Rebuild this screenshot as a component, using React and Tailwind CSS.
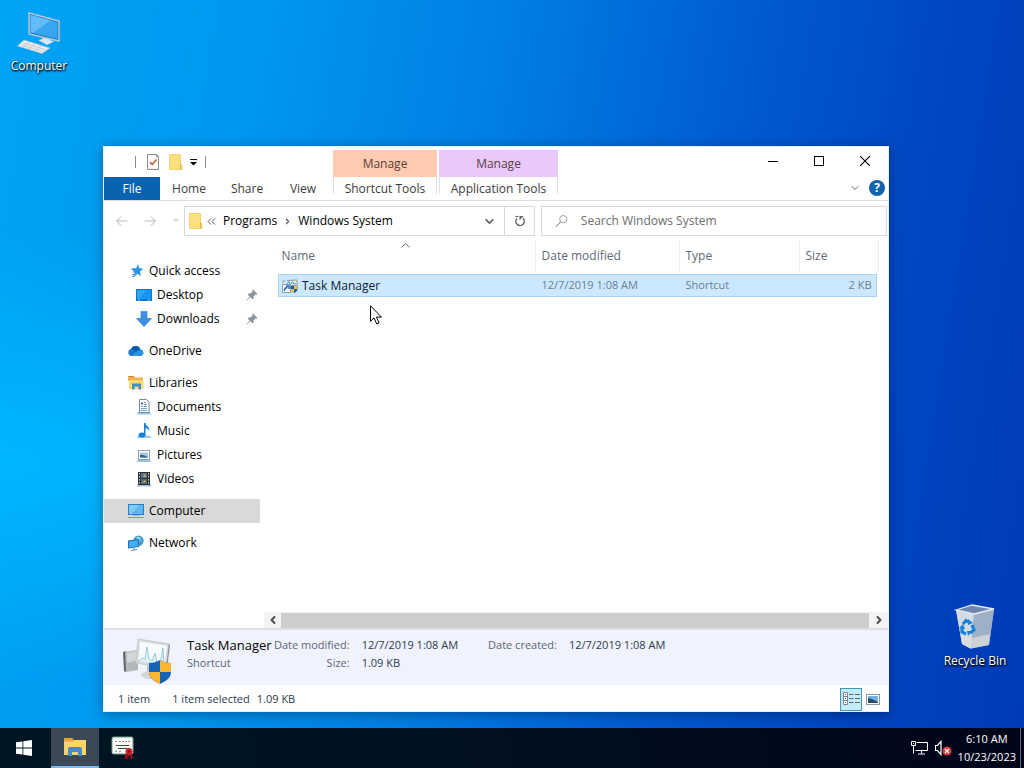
import { ChevronDown, ChevronLeft, ChevronRight } from 'lucide-react';

/* ---------- small icons (16px) ---------- */

const StarIcon = () => (
  <svg width="16" height="16" viewBox="0 0 16 16">
    <path d="M10 1l1.200 4.300 4.300.4-3.500 2.700 1 4.700-3.600-2.400L5.800 14l1-5L3.500 6l4.600-.5z" fill="#2b95e2" />
    <path d="M3.500 6h4M5 9h2M4.500 11.500h2M4.500 13.500h2" stroke="#1c7fcc" />
  </svg>
);

const DesktopIcon = () => (
  <svg width="16" height="16" viewBox="0 0 16 16">
    <rect x="0" y="2" width="16" height="12" fill="#0a78cf" />
    <rect x="1" y="3" width="14" height="9" fill="#1795f5" />
    <path d="M1 3h9L3 12H1z" fill="#2ea5fb" />
    <path d="M2 13h2M12 13h2" stroke="#9bd3ff" />
  </svg>
);

const DownloadIcon = () => (
  <svg width="16" height="16" viewBox="0 0 16 16">
    <path d="M5 .5h6v7h4.500L8 15.500.5 7.500H5z" fill="#3d8fe0" stroke="#2f7ccb" strokeWidth=".6" />
  </svg>
);

const CloudIcon = () => (
  <svg width="16" height="16" viewBox="0 0 16 16">
    <path d="M3.500 13a3.500 3.500 0 01-.4-6.900A5 5 0 0112.300 6.200 3.500 3.500 0 0113 13z" fill="#1a78cc" />
    <path d="M3.100 6.100A5 5 0 0112.300 6.200L8 8.500z" fill="#0d5bad" />
    <path d="M3.500 13L9 8l4-1.600A3.500 3.500 0 0113 13z" fill="#2a94e0" />
  </svg>
);

const LibrariesIcon = () => (
  <svg width="16" height="16" viewBox="0 0 16 16">
    <path d="M0 1h6l1 1.500h8V6H0z" fill="#eeb24a" />
    <path d="M1 1.500h4" stroke="#d8703a" />
    <path d="M1 5h14.500v9H1z" fill="#ffd970" />
    <path d="M4 14.500V8.500h9v6h-2.500v-3h-4v3z" fill="#3d8fd0" />
  </svg>
);

const DocumentsIcon = () => (
  <svg width="16" height="16" viewBox="0 0 16 16">
    <path d="M2 13h12l1.500 2.500H.5z" fill="#9cc7e2" />
    <path d="M3.500.5h7l2.500 2.500v10.500h-9.500z" fill="#fff" stroke="#71899c" />
    <path d="M8 3.500h2M8 5.500h3M5 7.500h2M8 7.500h3M5 9.500h6M5 11.500h6" stroke="#6fa3bd" />
    <path d="M5 4.500h2" stroke="#2d75b5" strokeWidth="2" />
  </svg>
);

const MusicIcon = () => (
  <svg width="16" height="16" viewBox="0 0 16 16">
    <path d="M2 12.500h12l1.500 2.500H.5z" fill="#a3cde6" />
    <ellipse cx="6" cy="12" rx="3.400" ry="2.600" fill="#1683dd" />
    <path d="M8 0h1.500c.3 3 4.500 3.500 3.600 8-.6-2-1.700-2.500-3.600-2.800V12H8z" fill="#1683dd" />
  </svg>
);

const PicturesIcon = () => (
  <svg width="16" height="16" viewBox="0 0 16 16">
    <rect x="2.500" y="3.500" width="11" height="9" fill="#fff" stroke="#8e9eab" />
    <rect x="4" y="5.500" width="8" height="5" fill="#9cc9e8" />
    <path d="M4 8l3 0 5 2v.5H4z" fill="#315e7c" />
    <path d="M2 13h12l1.500 2H.5z" fill="#9cc1da" />
  </svg>
);

const VideosIcon = () => (
  <svg width="16" height="16" viewBox="0 0 16 16">
    <path d="M2 13h12l1.500 2.500H.5z" fill="#9cc1da" />
    <rect x="2" y="1" width="12" height="13" fill="#2f3236" />
    <path d="M3.500 2v11M12.500 2v11" stroke="#c8ccd0" strokeDasharray="1.500 1.500" />
    <rect x="5" y="2" width="6" height="5" fill="#56718d" />
    <rect x="5" y="8" width="6" height="5" fill="#526477" />
    <path d="M7 5l2-2 1 3zM6 12l3-3 1 2z" fill="#e0b94a" />
  </svg>
);

const ComputerIcon = () => (
  <svg width="16" height="16" viewBox="0 0 16 16">
    <rect x="0" y="1" width="16" height="11" fill="#2582c4" />
    <rect x="1" y="2" width="14" height="9" fill="#5fb7ee" />
    <path d="M1 2h10L4 11H1z" fill="#7fcaf7" />
    <path d="M5 12.500h6" stroke="#a6bccb" />
    <path d="M0 14.500h16" stroke="#8396b8" />
  </svg>
);

const NetworkIcon = () => (
  <svg width="16" height="16" viewBox="0 0 16 16">
    <circle cx="10.500" cy="5.700" r="5.200" fill="#4a9ccc" />
    <path d="M8 2.500c2-1.500 4-.5 5 1.500l-2 3z" fill="#8fd0ec" />
    <path d="M0 5.500l11-1.500v8l-11 1.500z" fill="#1b73b8" />
    <path d="M1 6.400l9-1.200v6l-9 1.200z" fill="#41aef3" />
    <path d="M3 15.500l6-1M6 13v2" stroke="#4d91bf" />
  </svg>
);

const PinIcon = () => (
  <svg width="12" height="12" viewBox="0 0 12 12">
    <path d="M7 .5L11.500 5l-1 .8-.9-.3L7.500 7.600l.1 2-1 .9L4.300 8.200 1 11.500l-.5-.5L3.800 7.700 1.500 5.400l.9-1 2 .1L6.500 2.400 6.200 1.500z" fill="#8f979e" />
  </svg>
);

const FolderIcon = () => (
  <svg width="14" height="18" viewBox="0 0 14 18">
    <path d="M.5 1.500h11v9l1.500 1.500v4.500H.5z" fill="#fbdf80" stroke="#f3d46c" />
    <path d="M11.500 10.500V16.500" stroke="#dcb64a" />
  </svg>
);

const PropertiesIcon = () => (
  <svg width="14" height="16" viewBox="0 0 14 16">
    <path d="M1.500.5h9l2 2v13h-11z" fill="#fff" stroke="#8a8a8a" />
    <path d="M10.500.5v2h2" fill="none" stroke="#8a8a8a" />
    <path d="M4 8l2.200 2.500L10.500 5.500" fill="none" stroke="#c0623c" strokeWidth="1.600" />
  </svg>
);

const ShortcutIcon = () => (
  <svg width="16" height="16" viewBox="0 0 16 16">
    <path d="M1 5V3h2M5 2.500l10-.5v9l-7 1" fill="#e7eef2" stroke="#8d999f" />
    <path d="M5 6l2-2.500L8.500 7l2-3.500L12 6h2" fill="none" stroke="#3b94c8" />
    <rect x=".5" y="6.500" width="8" height="8" fill="#fff" stroke="#8aa0b4" />
    <path d="M2.500 13c0-2.500 1-3.500 3-3.500M4 8h3v3" fill="none" stroke="#1e66b8" strokeWidth="1.400" />
    <path d="M12 7l3.500 1v3c0 2-2 3.500-3.500 4-1.500-.5-3.500-2-3.500-4V8z" fill="#1b5fae" />
    <path d="M12 7l3.500 1v3H12zM12 11v4c-1.500-.5-3.500-2-3.500-4z" fill="#f3bd4c" />
  </svg>
);

/* ---------- large icons ---------- */

const ComputerLarge = () => (
  <svg width="48" height="48" viewBox="0 0 48 48">
    <path d="M14 4l30 8v20l-30-7z" fill="#1676c0" stroke="#b8cbd8" strokeWidth="1.400" />
    <path d="M15.500 6l27 7.200v16.800l-27-6.400z" fill="#37a6ee" />
    <path d="M15.500 6l20 5.300L18 24l-2.500-.6z" fill="#62bcf5" />
    <path d="M27 28l8 2v4l-8-2z" fill="#b7cbd6" />
    <path d="M23 31l8-1.500 8 3-7 3.500z" fill="#dce6ec" />
    <path d="M9 31l26 8-8 5.500L2.500 37z" fill="#e9edef" stroke="#aebfc9" strokeWidth=".7" />
    <path d="M8 34l23 7M6 36l22 6.500M14 33l-6 5M20 35l-6 5M26 37l-6 5" stroke="#b5c0c6" strokeWidth=".7" />
  </svg>
);

const RecycleBin = () => (
  <svg width="48" height="48" viewBox="0 0 48 48">
    <path d="M5 7l16-5 22 4-5 36-19 3.500L11 41z" fill="#bccde2" fillOpacity=".85" />
    <path d="M5 7l18 4-3 34.500L11 41z" fill="#d3dce5" />
    <path d="M23 11l20-5-5 36-18 3.500z" fill="#9eb0c8" />
    <path d="M5 7l16-5 22 4-20 5z" fill="#6f86ad" stroke="#e3ebf4" strokeWidth="1.300" />
    <path d="M10 32l11 3 18-4-1.500 11L20 45.500 11 41z" fill="#dededc" fillOpacity=".75" />
    <g fill="none" stroke="#1683d8" strokeWidth="3.200">
      <path d="M12 21l3-3.500 4 2.500M21 22l2 5-4 3M15 31l-4-2 0-5" />
    </g>
    <path d="M17 16l5 4-5 2zM21 28l-4 5-1-5zM8 25l4-4 2 5z" fill="#1683d8" />
  </svg>
);

const TaskManagerLarge = () => (
  <svg width="50" height="48" viewBox="0 0 50 48">
    <path d="M0 15l3-1v21l-2-1z" fill="#5f6468" />
    <path d="M2 15l13-2v20L3 35z" fill="#b3b7b9" />
    <path d="M4 16l11-2v9L4 26z" fill="#d3d6d7" />
    <path d="M15 2l31 5-3 24-30-5z" fill="#d6dadb" stroke="#c6cacb" />
    <path d="M17 4.500l27 4.300-2.500 19.500-26-4.200z" fill="#f7fafb" />
    <path d="M46 7l1 1-3 24-1-1z" fill="#848b90" />
    <path d="M15 25l4-4 3 1 2-12 2 12 3 2 3-8 2 10 3 1 3-16 1 18" fill="#c9e6f0" fillOpacity=".5" stroke="#7cc2db" strokeWidth=".8" />
    <path d="M24 28l8 1v9h-8z" fill="#bfc4c6" />
    <ellipse cx="27" cy="38" rx="9" ry="4" fill="#d5d8d9" />
    <path d="M37 23c3 2 7 3 11 3v9c0 6-5 9-11 12-6-3-11-6-11-12v-9c4 0 8-1 11-3z" fill="#1763b5" />
    <path d="M37 23c3 2 7 3 11 3v9H37z" fill="#fbb731" />
    <path d="M26 35h11v12c-6-3-11-6-11-12z" fill="#fbb731" />
  </svg>
);

const WindowsLogo = () => (
  <svg width="16" height="16" viewBox="0 0 16 16" fill="#fff">
    <path d="M0 2.300L6.500 1.400v6.200H0zM7.300 1.300L16 0v7.600H7.300zM0 8.400h6.500v6.200L0 13.700zM7.300 8.400H16V16l-8.700-1.300z" />
  </svg>
);

const ExplorerIcon = () => (
  <svg width="24" height="24" viewBox="0 0 24 24">
    <path d="M1 3h8l2 2h11v5H1z" fill="#e9a33c" />
    <path d="M1 6.500h9l1.500-1.500H23V20H1z" fill="#ffd466" />
    <path d="M5 21v-7.500L6.500 12h11l1.500 1.500V21h-4v-4H9v4z" fill="#3f8fcf" />
  </svg>
);

const CertificateIcon = () => (
  <svg width="24" height="24" viewBox="0 0 24 24">
    <rect x="1" y="1" width="21" height="17" rx="1.500" fill="#fbfcf8" stroke="#71998a" />
    <path d="M4 5.500h2M8 5.500h11" stroke="#7b8d83" strokeDasharray="2 1" />
    <path d="M5 9.500h13M7 12.500h9" stroke="#42464a" />
    <path d="M4 16l2-1M8 16l2-1" stroke="#4a9a68" />
    <path d="M15 17l-2 6 2-.5 1 1.500 2-5 2 5 1-1.500 2 .5-3-6z" fill="#8c0f1c" />
    <circle cx="18" cy="15.500" r="3.500" fill="#cf1f31" />
    <circle cx="18" cy="15.500" r="1.300" fill="#8c0f1c" />
  </svg>
);

const ribbonTabs = [
  { label: 'Home', width: 'w-[58px]' },
  { label: 'Share', width: 'w-[58px]' },
  { label: 'View', width: 'w-[54px]' },
];

const contextTabs = [
  { label: 'Shortcut Tools', width: 'w-[104px]', color: 'bg-[#ffcbb0]' },
  { label: 'Application Tools', width: 'w-[119px]', color: 'bg-[#e9c9fb]' },
];

const navGroups = [
  [
    { label: 'Quick access', icon: StarIcon },
    { label: 'Desktop', icon: DesktopIcon, child: true, pinned: true },
    { label: 'Downloads', icon: DownloadIcon, child: true, pinned: true },
  ],
  [{ label: 'OneDrive', icon: CloudIcon }],
  [
    { label: 'Libraries', icon: LibrariesIcon },
    { label: 'Documents', icon: DocumentsIcon, child: true },
    { label: 'Music', icon: MusicIcon, child: true },
    { label: 'Pictures', icon: PicturesIcon, child: true },
    { label: 'Videos', icon: VideosIcon, child: true },
  ],
  [{ label: 'Computer', icon: ComputerIcon, active: true }],
  [{ label: 'Network', icon: NetworkIcon }],
];

const columns = [
  { label: 'Name', className: 'w-[257px]', pad: 'pl-[3px]' },
  { label: 'Date modified', className: 'w-[144px]', pad: 'pl-1.5' },
  { label: 'Type', className: 'w-[120px]', pad: 'pl-1.5' },
];

function TitleBar() {
  return (
    <header className="flex h-[54px] shrink-0 border-b border-[#dadbdc]">
      <div className="flex w-[229px] flex-col">
        <div className="flex h-[30px] items-center pl-[31px]">
          <span className="h-3 w-px bg-[#8a8a8a]" />
          <button aria-label="Properties" className="ml-2.5"><PropertiesIcon /></button>
          <button aria-label="New folder" className="ml-[9px]"><FolderIcon /></button>
          <button aria-label="Customize Quick Access Toolbar" className="ml-1.5">
            <svg width="9" height="8" viewBox="0 0 9 8">
              <path d="M1 1.500h7" stroke="#000" />
              <path d="M1 4h7L4.500 7.500z" fill="#000" />
            </svg>
          </button>
          <span className="ml-[7px] h-3 w-px bg-[#8a8a8a]" />
        </div>
        <div className="flex h-[23px]">
          <button className="w-14 bg-[#0a63b1] text-white">File</button>
          {ribbonTabs.map((tab) => (
            <button key={tab.label} className={'text-center text-[#3b3b3b] ' + tab.width}>{tab.label}</button>
          ))}
        </div>
      </div>

      <div className="flex gap-[2px] pt-[3px]">
        {contextTabs.map((tab) => (
          <div key={tab.label} className={'flex flex-col text-center ' + tab.width}>
            <div className={'h-[27px] pt-1.5 text-[#5a3d3d] ' + tab.color}>Manage</div>
            <button className="h-[17px] border-x border-[#e0e0e0] pt-1 whitespace-nowrap text-[#3b3b3b]">{tab.label}</button>
          </div>
        ))}
      </div>

      <div className="ml-auto flex flex-col items-end">
        <div className="flex h-7">
          <button aria-label="Minimize" className="flex w-[46px] items-center justify-center">
            <svg width="10" height="10"><path d="M0 5.500h10" stroke="#000" /></svg>
          </button>
          <button aria-label="Maximize" className="flex w-[46px] items-center justify-center">
            <svg width="10" height="10"><rect x=".5" y=".5" width="9" height="9" fill="none" stroke="#000" /></svg>
          </button>
          <button aria-label="Close" className="flex w-[46px] items-center justify-center">
            <svg width="10" height="10"><path d="M0 0l10 10M10 0L0 10" stroke="#000" strokeWidth="1.100" /></svg>
          </button>
        </div>
        <div className="flex items-center gap-2 pt-[5px] pr-[3px]">
          <button aria-label="Expand the Ribbon"><ChevronDown size={12} color="#b8b8b8" strokeWidth={3} /></button>
          <button aria-label="Help" className="h-4 w-4 rounded-full bg-[#1163ae] text-xs leading-4 font-bold text-white">?</button>
        </div>
      </div>
    </header>
  );
}

function AddressBar() {
  return (
    <div className="flex h-10 shrink-0 items-center pr-px">
      <div className="flex w-20 items-center gap-4 pl-[11px]">
        <button aria-label="Back">
          <svg width="13" height="12" viewBox="0 0 13 12"><path d="M12.500 6H1.500M6 1.500L1.500 6 6 10.500" fill="none" stroke="#d0d0d0" strokeWidth="1.300" /></svg>
        </button>
        <button aria-label="Forward">
          <svg width="13" height="12" viewBox="0 0 13 12"><path d="M.5 6h11M7 1.500L11.500 6 7 10.500" fill="none" stroke="#d0d0d0" strokeWidth="1.300" /></svg>
        </button>
        <button aria-label="Recent locations">
          <svg width="6" height="4" viewBox="0 0 6 4"><path d="M0 0h6L3 3.500z" fill="#dcdcdc" /></svg>
        </button>
      </div>

      <div className="flex h-[30px] w-[351px] items-center border border-[#d9d9d9]">
        <div className="flex flex-1 items-center pl-1 text-black">
          <FolderIcon />
          <button aria-label="Parent folders" className="ml-1">
            <svg width="9" height="7" viewBox="0 0 9 7"><path d="M4 .5l-3 3 3 3M8 .5l-3 3 3 3" fill="none" stroke="#555" /></svg>
          </button>
          <button className="ml-[7px]">Programs</button>
          <ChevronRight size={9} color="#555" strokeWidth={3} className="mx-[6px]" />
          <button>Windows System</button>
        </div>
        <button aria-label="Previous locations" className="flex w-[29px] justify-center">
          <ChevronDown size={13} color="#6b6b6b" strokeWidth={3.500} />
        </button>
        <button aria-label="Refresh" className="flex h-full w-[30px] items-center justify-center border-l border-[#d9d9d9]">
          <svg width="12" height="12" viewBox="0 0 12 12">
            <path d="M9 3.300A4.200 4.200 0 112.800 3.600" fill="none" stroke="#666" strokeWidth="1.500" />
            <path d="M5.500 1v4.300L9.700 1z" fill="#666" />
            <path d="M1.500 1.500h3" stroke="#666" strokeWidth="1.200" />
          </svg>
        </button>
      </div>

      <label className="ml-1.5 flex h-[30px] min-w-0 flex-1 items-center gap-3 border border-[#d9d9d9] pl-[13px]">
        <svg width="15" height="14" viewBox="0 0 15 14">
          <circle cx="9" cy="5" r="4" fill="none" stroke="#9a9a9a" />
          <path d="M6 8L1 13" stroke="#9a9a9a" strokeWidth="1.200" />
        </svg>
        <input
          type="search"
          aria-label="Search Windows System"
          placeholder="Search Windows System"
          className="w-full bg-transparent outline-none placeholder:text-[#6d6d6d]"
        />
      </label>
    </div>
  );
}

function NavPane() {
  return (
    <nav className="flex w-[156px] shrink-0 flex-col gap-2 pt-[18px] text-black">
      {navGroups.map((group, i) => (
        <ul key={i}>
          {group.map((item) => (
            <li key={item.label}>
              <a
                href="#"
                className={'flex h-6 items-center gap-[5px] ' + (item.child ? 'pl-8 ' : 'pl-6 ') + (item.active ? 'bg-[#d9d9d9]' : '')}
              >
                <item.icon />
                <span>{item.label}</span>
                {item.pinned && <span className="mr-0.5 ml-auto"><PinIcon /></span>}
              </a>
            </li>
          ))}
        </ul>
      ))}
    </nav>
  );
}

function FileList() {
  return (
    <main className="flex min-w-0 flex-1 flex-col pl-1">
      <div className="relative flex-1 overflow-hidden pl-3.5">
        <svg className="absolute top-0.5 left-[137px]" width="9" height="5" viewBox="0 0 9 5">
          <path d="M.5 4.500l4-4 4 4" fill="none" stroke="#6d6d6d" />
        </svg>
        <table className="w-[601px] table-fixed">
          <thead>
            <tr className="text-left text-[#5f6a75]">
              {columns.map((col) => (
                <th key={col.label} className={'p-0 pb-[3px] font-normal ' + col.className}>
                  <div className={'flex h-[30px] items-center border-r border-[#ececec] ' + col.pad}>{col.label}</div>
                </th>
              ))}
              <th className="p-0 pb-[3px] font-normal">
                <div className="flex h-[30px] items-center pl-1.5">Size</div>
              </th>
              <th aria-hidden="true" className="w-[3px] p-0 pb-[3px]">
                <div className="h-[30px] border-r border-[#ececec]" />
              </th>
            </tr>
          </thead>
          <tbody>
            <tr className="h-[22px] text-[#6d7f90]">
              <td className="border border-r-0 border-[#a9d5f5] bg-[#cce8ff] p-0 pl-[3px]">
                <a href="#" className="flex items-center gap-1 text-[#0c1c2c]">
                  <ShortcutIcon />
                  Task Manager
                </a>
              </td>
              <td className="border-y border-[#a9d5f5] bg-[#cce8ff] p-0 pl-1.5 text-[11px]">12/7/2019 1:08 AM</td>
              <td className="border-y border-[#a9d5f5] bg-[#cce8ff] p-0 pl-1.5 text-[11px]">Shortcut</td>
              <td className="border border-l-0 border-[#a9d5f5] bg-[#cce8ff] p-0 pr-1 text-right text-[11px]">2 KB</td>
              <td />
            </tr>
          </tbody>
        </table>

        {/* Pointer */}
        <svg className="absolute top-16 left-[106px]" width="12" height="20" viewBox="0 0 12 20">
          <path d="M.5.8v15.500l3.600-3.400 2.600 6 2.400-1-2.600-5.800h5z" fill="#fff" stroke="#000" />
        </svg>
      </div>

      <div className="flex h-4 shrink-0 items-center bg-[#f3f3f3]">
        <button aria-label="Scroll left" className="flex w-[17px] justify-center"><ChevronLeft size={12} color="#505050" strokeWidth={4} /></button>
        <div className="h-[15px] flex-1 bg-[#cdcdcd]" />
        <button aria-label="Scroll right" className="flex w-[19px] justify-center"><ChevronRight size={12} color="#505050" strokeWidth={4} /></button>
      </div>
    </main>
  );
}

function DetailsPane() {
  return (
    <section className="flex h-[57px] shrink-0 border-t-2 border-[#dcdfe4] bg-[#f0f3fd] pl-[19px]">
      <div className="pt-[7px]"><TaskManagerLarge /></div>
      <div className="ml-3.5 flex gap-1 pt-1.5 text-[11px] leading-[18px] whitespace-nowrap text-[#5b6577]">
        <div className="w-[83px]">
          <h2 className="text-[13px] leading-[18px] text-black">Task Manager</h2>
          <p>Shortcut</p>
        </div>
        <dl className="grid grid-cols-[auto_auto] content-start gap-x-3">
          <dt className="text-right">Date modified:</dt>
          <dd className="text-[#2b3a52]">12/7/2019 1:08 AM</dd>
          <dt className="text-right">Size:</dt>
          <dd className="text-[#2b3a52]">1.09 KB</dd>
        </dl>
        <dl className="ml-[26px] flex gap-3">
          <dt>Date created:</dt>
          <dd className="text-[#2b3a52]">12/7/2019 1:08 AM</dd>
        </dl>
      </div>
    </section>
  );
}

function StatusBar() {
  return (
    <footer className="flex h-[26px] shrink-0 items-center pt-0.5 pr-2 pl-3.5 text-[11px] text-[#2b3a52]">
      <span>1 item</span>
      <span className="ml-[22px]">1 item selected</span>
      <span className="ml-[7px]">1.09 KB</span>
      <button aria-label="Details view" className="ml-auto flex h-[23px] w-[22px] items-center justify-center border border-[#3f97ba] bg-[#c4ebf8]">
        <svg width="17" height="14" viewBox="0 0 17 14">
          <path d="M.5.5h4v12h-4zM.5 4.500h4M.5 8.500h4" fill="#fff" stroke="#7c8790" />
          <path d="M2 2.500h1M2 6.500h1M2 10.500h1" stroke="#3b5568" />
          <path d="M6 2.500h4.500M12 2.500h5M6 6.500h4.500M12 6.500h5M6 10.500h4.500M12 10.500h5" stroke="#5d6870" />
        </svg>
      </button>
      <button aria-label="Large icons view" className="ml-1">
        <svg width="14" height="11" viewBox="0 0 14 11">
          <rect x=".5" y=".5" width="13" height="10" fill="#fff" stroke="#8a98a8" />
          <rect x="2" y="2" width="10" height="7" fill="#72b3e3" />
          <path d="M2 4l4 1 6 3v1H2z" fill="#24506b" />
        </svg>
      </button>
    </footer>
  );
}

function Taskbar() {
  return (
    <div className="flex h-10 shrink-0 bg-linear-to-r from-[#001622] via-[#00101f] to-[#000518] text-white">
      <button aria-label="Start" className="flex w-12 items-center justify-center"><WindowsLogo /></button>
      <button aria-label="File Explorer" className="ml-[3px] flex w-12 items-center justify-center border-b-2 border-[#76b9ed] bg-[#3a4955]"><ExplorerIcon /></button>
      <button aria-label="Certificates" className="flex w-12 items-center justify-center"><CertificateIcon /></button>
      <div className="ml-auto flex items-center">
        <button aria-label="Network">
          <svg width="17" height="16" viewBox="0 0 17 16" fill="none" stroke="#fff">
            <path d="M5.500 2.500h11v8H4.500M.5 1.500h4v4h-4zM2.500 5.500v8M10.500 10.500v3M7 14h7" />
            <path d="M2 3.500h1" />
          </svg>
        </button>
        <button aria-label="Volume muted" className="ml-[7px]">
          <svg width="17" height="16" viewBox="0 0 17 16">
            <path d="M.5 5.500h2l3.500-4v13l-3.500-4h-2z" fill="none" stroke="#fff" strokeWidth="1.200" />
            <circle cx="12" cy="11" r="4.500" fill="#d83b3b" />
            <path d="M10 9l4 4M14 9l-4 4" stroke="#fff" strokeWidth="1.200" />
          </svg>
        </button>
        <button className="ml-1.5 text-center text-[11px] leading-[18px]">
          <span className="block">6:10 AM</span>
          <span className="block">10/23/2023</span>
        </button>
        <button aria-label="Show desktop" className="ml-1 h-full w-1 border-l border-[#5b6470]" />
      </div>
    </div>
  );
}

export default function App() {
  return (
    <div className="relative flex h-screen flex-col overflow-hidden bg-[radial-gradient(ellipse_at_0%_60%,#00b6ff_0%,#00b6ff00_35%),linear-gradient(99deg,#00a4f6_0%,#0096ef_24%,#007ee4_45%,#005bd2_66%,#0045c2_84%,#003ab6_100%)] font-['Open_Sans','Noto_Sans',sans-serif] text-xs">
      <div className="relative flex-1">
        <button className="absolute top-[9px] left-1 flex w-[70px] flex-col items-center gap-px text-white [text-shadow:1px_1px_2px_#000,0_1px_2px_#000]">
          <ComputerLarge />
          Computer
        </button>
        <button className="absolute right-3 bottom-[59px] flex w-[74px] flex-col items-center gap-0.5 whitespace-nowrap text-white [text-shadow:1px_1px_2px_#000,0_1px_2px_#000]">
          <RecycleBin />
          Recycle Bin
        </button>

        {/* Explorer window */}
        <div className="absolute top-[146px] right-[135px] bottom-4 left-[103px] flex flex-col border border-[#e4f0fa] bg-white shadow-[0_2px_12px_rgba(0,0,0,0.35)]">
          <TitleBar />
          <AddressBar />
          <div className="flex min-h-0 flex-1">
            <NavPane />
            <FileList />
          </div>
          <DetailsPane />
          <StatusBar />
        </div>
      </div>
      <Taskbar />
    </div>
  );
}
